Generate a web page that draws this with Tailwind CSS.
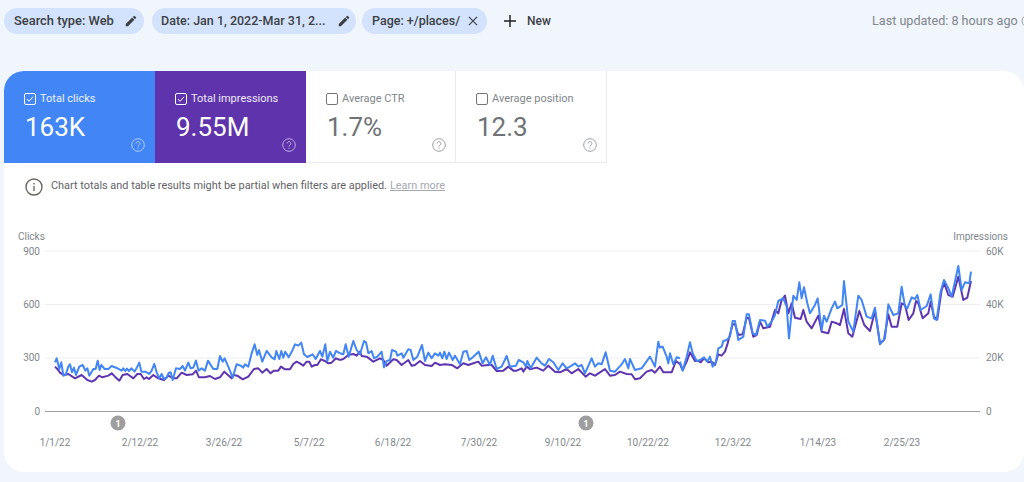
<!DOCTYPE html>
<html lang="en">
<head>
  <meta charset="UTF-8">
  <title>Performance</title>
  <script src="https://cdn.jsdelivr.net/npm/@tailwindcss/browser@4"></script>
</head>
<body class="bg-[#f1f5fc] h-[482px] w-[1024px] overflow-hidden font-['Roboto',sans-serif]">
  <!-- filter bar -->
  <div class="h-[71px] pl-1 pt-2 flex items-start text-[12.5px] text-[#3c4043] whitespace-nowrap">
    <div class="h-[26px] w-[140px] rounded-full bg-[#d3e3fd] pl-[10px] pr-[6px] flex items-center justify-between font-medium">
      <span class="text-[12.9px]">Search type: Web</span>
      <svg class="w-[14px] h-[14px]" viewBox="0 0 24 24" fill="#3c4043"><path d="M3 17.25V21h3.75L17.81 9.94l-3.75-3.75L3 17.25zM20.71 7.04a1 1 0 0 0 0-1.41l-2.34-2.34a1 1 0 0 0-1.41 0l-1.83 1.83 3.75 3.75 1.83-1.83z"/></svg>
    </div>
    <div class="h-[26px] w-[204px] ml-2 rounded-full bg-[#d3e3fd] pl-[9px] pr-[5px] flex items-center justify-between font-medium">
      <span>Date: Jan 1, 2022-Mar 31, 2...</span>
      <svg class="w-[14px] h-[14px]" viewBox="0 0 24 24" fill="#3c4043"><path d="M3 17.25V21h3.75L17.81 9.94l-3.75-3.75L3 17.25zM20.71 7.04a1 1 0 0 0 0-1.41l-2.34-2.34a1 1 0 0 0-1.41 0l-1.83 1.83 3.75 3.75 1.83-1.83z"/></svg>
    </div>
    <div class="h-[26px] w-[125px] ml-[6px] rounded-full bg-[#d3e3fd] pl-[10px] pr-[7px] flex items-center justify-between font-medium">
      <span>Page: +/places/</span>
      <svg class="w-[14px] h-[14px]" viewBox="0 0 24 24" fill="none" stroke="#3c4043" stroke-width="2"><path d="M5 5l14 14M19 5L5 19"/></svg>
    </div>
    <div class="h-[26px] ml-[15px] flex items-center font-medium text-[12px]">
      <svg class="w-[16px] h-[16px] mr-[9px]" viewBox="0 0 24 24" fill="none" stroke="#202124" stroke-width="2.2"><path d="M12 3v18M3 12h18"/></svg>
      <span>New</span>
    </div>
    <div class="ml-auto h-[26px] w-[152px] shrink-0 flex items-center overflow-hidden text-[#80868b] text-[12.6px]">
      <span class="shrink-0">Last updated: 8 hours ago</span>
      <svg class="w-[14px] h-[14px] ml-[3px] shrink-0" viewBox="0 0 14 14" fill="none" stroke="#9aa0a6"><circle cx="7" cy="7" r="6"/></svg>
    </div>
  </div>

  <!-- main card -->
  <div class="ml-1 h-[401px] bg-white rounded-[20px] overflow-hidden">
    <div class="flex h-[92px]">
      <div class="relative w-[151px] bg-[#4285f4] text-white pl-[20px] pt-[21px]">
        <div class="flex items-center gap-[4px] text-[11px] leading-[14px] text-white/90">
          <svg class="w-[12px] h-[12px]" viewBox="0 0 12 12" fill="none" stroke="white"><rect x=".5" y=".5" width="11" height="11" rx="1.5"/><path d="M2.8 6l2.2 2.3 4-4.5"/></svg>
          <span>Total clicks</span>
        </div>
        <div class="text-[26px] leading-[30px] mt-[6px] ml-[1px]">163K</div>
        <svg class="absolute right-[10px] bottom-[11px] w-[14px] h-[14px] opacity-60" viewBox="0 0 14 14" fill="none" stroke="white"><circle cx="7" cy="7" r="6.3"/><path d="M5.1 5.5a1.9 1.9 0 1 1 3 1.5c-.7.5-1.1.8-1.1 1.6M7 9.6v1.1"/></svg>
      </div>
      <div class="relative w-[151px] bg-[#5e33ab] text-white pl-[20px] pt-[21px]">
        <div class="flex items-center gap-[4px] text-[11px] leading-[14px] text-white/90">
          <svg class="w-[12px] h-[12px]" viewBox="0 0 12 12" fill="none" stroke="white"><rect x=".5" y=".5" width="11" height="11" rx="1.5"/><path d="M2.8 6l2.2 2.3 4-4.5"/></svg>
          <span>Total impressions</span>
        </div>
        <div class="text-[26px] leading-[30px] mt-[6px] ml-[1px]">9.55M</div>
        <svg class="absolute right-[10px] bottom-[11px] w-[14px] h-[14px] opacity-60" viewBox="0 0 14 14" fill="none" stroke="white"><circle cx="7" cy="7" r="6.3"/><path d="M5.1 5.5a1.9 1.9 0 1 1 3 1.5c-.7.5-1.1.8-1.1 1.6M7 9.6v1.1"/></svg>
      </div>
      <div class="relative w-[150px] border-r border-b border-[#e8eaed] text-[#80868b] pl-[20px] pt-[21px]">
        <div class="flex items-center gap-[4px] text-[11px] leading-[14px]">
          <svg class="w-[12px] h-[12px]" viewBox="0 0 12 12" fill="none" stroke="#757575"><rect x=".5" y=".5" width="11" height="11" rx="1.5"/></svg>
          <span>Average CTR</span>
        </div>
        <div class="text-[26px] leading-[30px] mt-[6px] ml-[1px] text-[#6f7276]">1.7%</div>
        <svg class="absolute right-[9px] bottom-[10px] w-[14px] h-[14px]" viewBox="0 0 14 14" fill="none" stroke="#9aa0a6"><circle cx="7" cy="7" r="6.3"/><path d="M5.1 5.5a1.9 1.9 0 1 1 3 1.5c-.7.5-1.1.8-1.1 1.6M7 9.6v1.1"/></svg>
      </div>
      <div class="relative w-[151px] border-r border-b border-[#e8eaed] text-[#80868b] pl-[20px] pt-[21px]">
        <div class="flex items-center gap-[4px] text-[11px] leading-[14px]">
          <svg class="w-[12px] h-[12px]" viewBox="0 0 12 12" fill="none" stroke="#757575"><rect x=".5" y=".5" width="11" height="11" rx="1.5"/></svg>
          <span>Average position</span>
        </div>
        <div class="text-[26px] leading-[30px] mt-[6px] ml-[1px] text-[#6f7276]">12.3</div>
        <svg class="absolute right-[9px] bottom-[10px] w-[14px] h-[14px]" viewBox="0 0 14 14" fill="none" stroke="#9aa0a6"><circle cx="7" cy="7" r="6.3"/><path d="M5.1 5.5a1.9 1.9 0 1 1 3 1.5c-.7.5-1.1.8-1.1 1.6M7 9.6v1.1"/></svg>
      </div>
    </div>

    <div class="h-[46px] pl-[21px] flex items-center text-[10.9px] text-[#5f6368] pt-[1px]">
      <svg class="w-[18px] h-[18px] mr-[8px]" viewBox="0 0 18 18" fill="none" stroke="#6b6660" stroke-width="1.4"><circle cx="9" cy="9" r="8"/><path d="M9 8v5M9 5v1.6"/></svg>
      <span>Chart totals and table results might be partial when filters are applied.</span>
      <span class="ml-[3px] text-[#a5a9ae] underline text-[10.9px]">Learn more</span>
    </div>

    <!-- chart -->
    <svg class="block mt-4" width="1020" height="247" viewBox="4 225 1020 247" font-family="Roboto, sans-serif" font-size="10" fill="#80868b">
      <g stroke="#eceef0" stroke-width="1">
        <path d="M45 251H980M45 304.5H980M45 358H980"/>
      </g>
      <path d="M45 411.5H980" stroke="#9aa0a6" stroke-width="1.2"/>

      <text x="18" y="240">Clicks</text>
      <text x="1008" y="240" text-anchor="end">Impressions</text>
      <g text-anchor="end">
        <text x="40" y="255">900</text>
        <text x="40" y="308">600</text>
        <text x="40" y="361">300</text>
        <text x="40" y="415">0</text>
      </g>
      <text x="986" y="255">60K</text>
      <text x="986" y="308">40K</text>
      <text x="986" y="361">20K</text>
      <text x="986" y="415">0</text>

      <g text-anchor="middle">
        <text x="55" y="446">1/1/22</text>
        <text x="140" y="446">2/12/22</text>
        <text x="224" y="446">3/26/22</text>
        <text x="309" y="446">5/7/22</text>
        <text x="393" y="446">6/18/22</text>
        <text x="479" y="446">7/30/22</text>
        <text x="563" y="446">9/10/22</text>
        <text x="648" y="446">10/22/22</text>
        <text x="733" y="446">12/3/22</text>
        <text x="818" y="446">1/14/23</text>
        <text x="902" y="446">2/25/23</text>
      </g>

      <circle cx="118" cy="423" r="7.5" fill="#9e9e9e"/>
      <text x="118" y="426.5" text-anchor="middle" font-size="9.5" font-weight="700" fill="#fff">1</text>
      <circle cx="586" cy="423" r="7.5" fill="#9e9e9e"/>
      <text x="586" y="426.5" text-anchor="middle" font-size="9.5" font-weight="700" fill="#fff">1</text>

      <!-- impressions -->
      <g fill="none" stroke="#5e35b1" stroke-width="6" stroke-linejoin="round">
        <polyline transform="translate(0 225) scale(.3333)" points="165,425 172,432 180,443 190,450 205,447 225,460 245,450 262,465 275,470 285,465 297,452 307,457 325,452 335,445 345,455 358,467 368,450 382,447 400,460 412,447 422,447 432,462 440,457 447,462 460,450 475,460 492,465 505,452 520,460 530,460 545,443 560,450 578,448 588,437 597,457 615,457 630,453 645,462 660,457 673,440 695,460 700,450 712,452 728,463 745,455 762,432 775,430 787,443 800,432 812,445 822,437 835,437 843,425 855,433 870,433 880,417 890,410 900,415 910,422 920,410 928,410 935,425 945,420 952,420 963,403 975,408 985,415 995,413 1008,400 1020,405"/>
        <polyline transform="translate(340 225) scale(.3333)" points="0,405 10,402 25,390 40,387 50,392 60,380 65,393 80,395 100,410 120,400 130,405 140,422 160,403 170,405 185,420 205,405 215,422 225,420 240,408 255,420 275,423 285,413 300,420 315,418 335,420 352,430 370,415 385,420 400,415 415,410 425,422 445,420 455,420 470,438 490,437 505,425 520,437 530,437 545,430 550,440 560,425 570,433 590,428 610,437 625,422 645,440 660,442 680,432 695,445 715,432 737,455 750,445 765,452 780,442 795,432 810,452 825,450 840,440 860,447 875,448 885,463 900,460 920,440 935,435 945,443 960,425 970,442 995,442 1008,408 1020,418"/>
        <polyline transform="translate(680 225) scale(.3333)" points="0,418 8,435 20,410 30,382 45,408 55,408 62,412 72,400 85,412 95,410 105,420 115,388 125,392 135,380 143,355 158,298 165,298 175,330 188,328 200,278 207,280 220,335 230,330 240,290 250,310 270,305 285,255 295,265 305,225 315,212 325,265 335,235 345,278 362,282 370,255 380,290 395,310 415,272 425,320 445,325 455,290 470,295 480,300 492,252 505,325 517,335 538,258 553,300 570,318 585,258 600,355 612,345 625,268 635,305 652,305 665,235 675,240 686,285 700,265 708,228 715,235 728,280 745,265 752,230 762,275 772,283 785,195 793,175 805,210 818,215 835,155 850,225 862,218 873,168"/>
      </g>
      <!-- clicks -->
      <g fill="none" stroke="#4285f4" stroke-width="6" stroke-linejoin="round">
        <polyline transform="translate(0 225) scale(.3333)" points="165,412 170,400 178,432 184,412 190,452 197,450 205,425 210,418 216,442 222,428 228,450 238,425 248,420 256,437 262,430 268,452 280,432 287,432 293,407 299,435 304,420 314,432 325,432 335,423 350,429 365,437 370,430 376,438 381,431 387,438 394,430 404,440 412,425 418,413 424,440 436,440 448,447 455,437 463,417 470,442 478,460 485,447 492,462 500,458 506,444 512,442 518,465 528,430 540,432 548,423 555,437 565,413 572,430 580,428 588,407 596,437 605,430 615,437 624,407 640,432 652,432 660,393 668,410 674,400 685,425 698,458 710,418 722,422 730,428 735,418 745,425 755,385 764,358 772,390 777,375 787,410 800,378 815,397 824,403 829,378 838,402 844,378 850,398 856,380 866,397 878,375 885,358 895,362 904,353 912,388 922,396 938,388 947,402 960,378 967,395 976,358 982,408 990,380 1000,398 1008,378 1020,385"/>
        <polyline transform="translate(340 225) scale(.3333)" points="0,385 10,388 17,358 26,395 40,348 50,375 60,388 72,348 78,352 85,385 95,378 102,400 112,395 125,380 132,427 140,408 150,405 156,375 168,380 172,392 185,385 190,398 205,373 212,375 220,405 232,395 246,360 255,408 265,383 275,400 285,385 295,392 300,383 307,400 313,380 320,402 327,383 338,405 345,392 360,418 370,380 380,378 388,405 400,395 416,380 428,415 438,397 450,420 458,392 470,432 485,425 500,393 510,425 528,422 536,405 550,412 558,425 562,408 572,430 590,398 605,415 615,422 627,402 640,412 655,435 668,415 680,430 690,425 705,415 715,425 725,420 735,445 755,400 765,425 775,415 785,418 797,382 810,437 825,440 845,418 855,402 865,430 870,402 885,435 905,430 930,395 945,425 955,350 960,368 968,365 980,395 985,415 990,385 1000,418 1010,397 1020,400"/>
        <polyline transform="translate(680 225) scale(.3333)" points="0,410 8,437 20,395 30,352 38,385 50,408 60,405 72,397 82,410 90,395 98,425 108,410 115,370 125,365 130,348 140,345 150,335 158,288 165,288 175,345 190,335 200,268 207,268 218,325 228,330 240,285 255,287 262,305 275,290 285,270 295,228 310,220 320,245 327,340 340,212 350,225 358,172 365,220 372,187 382,235 390,265 405,240 413,220 425,315 432,272 440,290 455,250 465,230 472,250 487,240 492,168 505,290 520,320 535,212 545,225 560,275 575,280 585,248 600,358 615,340 625,238 640,270 655,265 665,185 675,245 682,250 695,217 705,222 712,210 722,255 740,243 752,208 762,280 770,285 782,200 792,165 805,190 815,215 835,123 845,195 855,172 868,175 873,140"/>
      </g>
    </svg>
  </div>
</body>
</html>
